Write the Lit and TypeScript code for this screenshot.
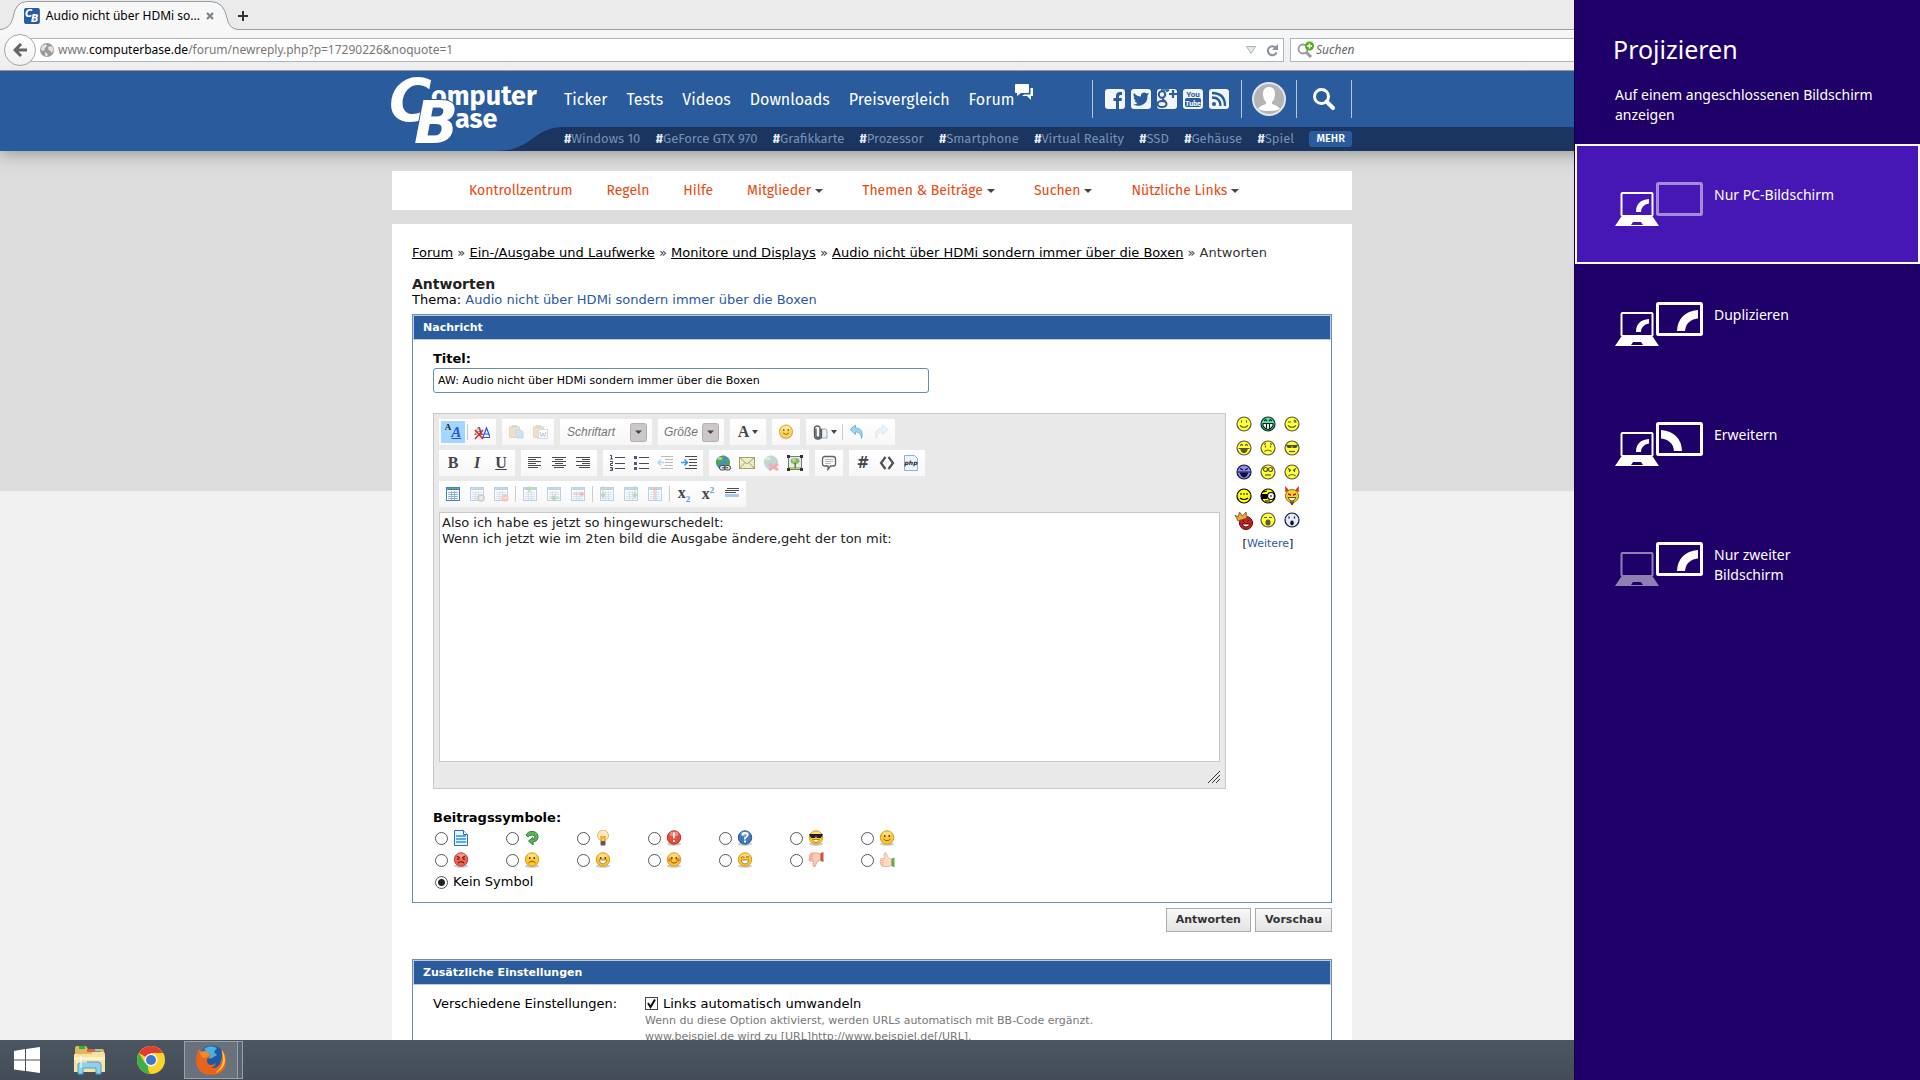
import { LitElement, html, svg, css, TemplateResult } from "lit";
import { customElement } from "lit/decorators.js";
import { classMap } from "lit/directives/class-map.js";

type Art = ReturnType<typeof svg>;

const icon = (w: number, h: number, art: Art, vb = `0 0 ${w} ${h}`): TemplateResult =>
  html`<svg width=${w} height=${h} viewBox=${vb} aria-hidden="true">${art}</svg>`;

/* ---------- editor tool icons, 16x16 ---------- */
const lines = (rows: number[][], color = "#4a4a50"): Art =>
  svg`${rows.map(([x, y, w]) => svg`<rect x=${x} y=${y} width=${w} height="1" fill=${color} />`)}`;

const table = svg`<rect x="1.5" y="1.5" width="13" height="13" fill="#fff" stroke="#4a7fc0"/>
  <rect x="2" y="2" width="12" height="2" fill="#5c97dc"/><rect x="3" y="3" width="10" height="1" fill="#4f8a4a"/>
  <path d="M3 6.5h10M3 8.5h10M3 10.5h10M3 12.5h10M6.5 5v9M9.5 5v9" stroke="#8db2df" fill="none"/>`;
const globe = svg`<circle cx="8" cy="7.5" r="7" fill="#4d87d6"/><path d="M2 4C4 1 8 0 10 1L8 4 9 6 5 8 3 12 1 8zM11 3l3 2 .8 4-3 4-2-3 1-3z" fill="#4fa64a"/><ellipse cx="5" cy="3.500" rx="2.500" ry="1.500" fill="#fff" opacity=".5"/>`;

const art: Record<string, Art> = {
  paste: svg`<rect x="1.500" y="2.500" width="10" height="11" rx="1" fill="#dca963" stroke="#c58c42"/><rect x="4" y="1" width="5" height="3" fill="#999"/><path d="M7 6h6l2 2v6H9z" fill="#76bde8" stroke="#5b9bc8"/>`,
  pasteword: svg`<rect x="1.500" y="2.500" width="10" height="11" rx="1" fill="#dca963" stroke="#c58c42"/><rect x="4" y="1" width="5" height="3" fill="#999"/><rect x="6.500" y="5.500" width="9" height="9" fill="#fff" stroke="#7f9fd0"/><path d="M8 8l1.500 5 1.500-4 1.500 4L14 8" stroke="#5570a0" fill="none"/>`,
  smile: svg`<circle cx="8" cy="8.500" r="7" fill="#b9a88a" opacity=".5"/><circle cx="8" cy="7.500" r="6.500" fill="#fcd45c" stroke="#e2a63a"/><ellipse cx="8" cy="4.500" rx="4.500" ry="2.500" fill="#fff" opacity=".45"/><path d="M5 9q3 3 6 0" stroke="#9a6a1c" fill="none"/><rect x="5" y="5" width="1.500" height="2" fill="#9a6a1c"/><rect x="9.500" y="5" width="1.500" height="2" fill="#9a6a1c"/>`,
  clip: svg`<path d="M8 5h6l1 2v7H8z" fill="#eef3f8" stroke="#9ab" /><path d="M4 4.500v7a2 2 0 004 0V3.500a3 2.500 0 00-5.500 0V12a3.500 3 0 007 0V5" fill="none" stroke="#555" stroke-width="1.300"/>`,
  undo: svg`<path d="M1 5.500L6.500 1v3C12 4 14.500 8 12.500 14.500 12 10 10 8 6.500 8v2.500z" fill="#9fd2f4" stroke="#5fa7d8" stroke-width=".8"/>`,
  redo: svg`<path d="M15 5.500L9.500 1v3C4 4 1.500 8 3.500 14.500 4 10 6 8 9.500 8v2.500z" fill="#c6e3f6" stroke="#8cc0de" stroke-width=".8"/>`,
  left: lines([[1, 2, 13], [1, 4, 8], [1, 6, 13], [1, 8, 8], [1, 10, 13], [1, 12, 10]]),
  center: lines([[1, 2, 14], [4, 4, 8], [1, 6, 14], [4, 8, 8], [1, 10, 14], [3, 12, 10]]),
  right: lines([[1, 2, 14], [7, 4, 8], [1, 6, 14], [7, 8, 8], [1, 10, 14], [4, 12, 11]]),
  ol: svg`${lines([[6, 2, 10], [6, 8, 10], [6, 13, 10]])}<path d="M2.500 0v4M1 .500h1.500M1 4h3M1 6.500h2.500v2H1.500v2H4M1 12.500h2.500v3H1M1.500 14h2" stroke="#4a4a60" fill="none"/>`,
  ul: svg`${lines([[6, 2, 10], [6, 8, 10], [6, 13, 10]])}<rect x="1" y="1" width="3" height="3" fill="#557"/><rect x="1" y="7" width="3" height="3" fill="#557"/><rect x="1" y="12" width="3" height="3" fill="#557"/>`,
  outdent: svg`${lines([[4, 1, 12], [8, 4, 8], [8, 7, 8], [8, 10, 8], [4, 13, 12]])}<path d="M7 7.500H1M4 4.500l-3 3 3 3" stroke="#2a9bd8" stroke-width="1.500" fill="none"/>`,
  indent: svg`${lines([[4, 1, 12], [8, 4, 8], [8, 7, 8], [8, 10, 8], [4, 13, 12]])}<path d="M0 7.500h6M3.500 4.500l3 3-3 3" stroke="#2a9bd8" stroke-width="1.500" fill="none"/>`,
  link: svg`${globe}<rect x="4.500" y="10.500" width="6" height="4.500" rx="2" fill="#ddd" stroke="#444"/><rect x="9.500" y="10.500" width="6" height="4.500" rx="2" fill="#ddd" stroke="#444"/><path d="M7 12.800h6" stroke="#444"/>`,
  mail: svg`<rect x=".500" y="2.500" width="15" height="11" fill="#eeeec4" stroke="#a0a070"/><path d="M1 3l7 6 7-6M1 13l5-5.500M15 13l-5-5.500" stroke="#a0a070" fill="none"/>`,
  unlink: svg`${globe}<path d="M6 9l9 6M15 9l-9 6" stroke="#e02020" stroke-width="3"/>`,
  image: svg`<rect x="1.500" y="1.500" width="13" height="13" fill="#dff0f4" stroke="#777"/><rect x="2" y="12" width="12" height="2" fill="#a6d468"/><ellipse cx="8" cy="6" rx="4.500" ry="3" fill="#86b85c"/><circle cx="7" cy="5" r="2" fill="#b4d88c"/><rect x="7.500" y="8" width="1.500" height="5" fill="#8a6238"/><path d="M0 0h3v3H0zM13 0h3v3h-3zM0 13h3v3H0zM13 13h3v3h-3z" fill="#333"/>`,
  quote: svg`<path d="M4 1.500h8q2.500 0 2.500 2.500v5q0 2-2.500 2H9.500L7 14.500V11H4q-2.500 0-2.500-2V4Q1.500 1.500 4 1.500z" fill="#fff" stroke="#606068" stroke-width="1.300"/><path d="M4 4.500h8M4 6.500h8M4 8.500h6" stroke="#bbb"/>`,
  code: svg`<path d="M6.500 2L2 8l4.500 6M9.500 2L14 8l-4.500 6" stroke="#4e4e58" stroke-width="2.200" fill="none"/>`,
  table,
  tableprop: svg`${table}<circle cx="12" cy="12" r="3" fill="#ccc" stroke="#777" stroke-width="1.500"/>`,
  tabledel: svg`${table}<circle cx="12" cy="12" r="3.500" fill="#e86a2c"/><rect x="10" y="11.500" width="4" height="1" fill="#fff"/>`,
  rowbefore: svg`${table}<path d="M15 3H6M8 .500L4 3l4 2.500z" stroke="#3c9a3c" fill="#3c9a3c"/>`,
  rowafter: svg`${table}<path d="M15 12H8M9 9.500L5 12l4 2.500z" stroke="#3c9a3c" fill="#3c9a3c"/>`,
  rowdel: svg`${table}<path d="M3 8h9M11 6l4 2-4 2z" stroke="#e04040" fill="#e04040"/>`,
  colbefore: svg`${table}<path d="M4 0v9M2 8l2 4 2-4z" stroke="#3c9a3c" fill="#3c9a3c"/>`,
  colafter: svg`${table}<path d="M12 0v9M10 8l2 4 2-4z" stroke="#3c9a3c" fill="#3c9a3c"/>`,
  coldel: svg`${table}<path d="M8 4v10M6 4l2-3 2 3z" stroke="#e04040" fill="#e04040"/>`,
  hr: svg`${lines([[3, 2, 12], [1, 4, 14], [1, 6, 11]])}<rect x="1" y="8" width="14" height="3" fill="#a9c8f0"/>`,
};

/* ---------- forum smilies ---------- */
const face = (fill: string, line: string, features: Art): Art =>
  svg`<circle cx="8" cy="8" r="7" fill=${fill} stroke=${line} stroke-width="1.200"/><g fill="none" stroke=${line} stroke-width="1.200">${features}</g>`;
const Y = "#ffff3c";
const L = "#5c5836";
const smilies: [string, Art][] = [
  ["Smile", face(Y, L, svg`<path d="M5.500 4.500v2M10.500 4.500v2M4 9.500q4 3.500 8 0"/>`)],
  ["Biggrin", face("#4fe3a8", "#0c2a20", svg`<path d="M4 5l1.500-1.500L7 5M9 5l1.500-1.500L12 5"/><path d="M3 7.500h10v2q-2 4-5 4t-5-4z" fill="#fff"/><path d="M6.500 8v5M9.500 8v5"/>`)],
  ["Wink", face(Y, L, svg`<path d="M4 6h3M10 4l2 1.500M9.500 6h3M4 9.500q4 3.500 8 0"/>`)],
  ["Lol", face(Y, L, svg`<path d="M4 5.500l1.500-1 1.500 1M9 5.500l1.500-1 1.500 1M2.500 8.500h11"/><path d="M5 9.500h6q-1 3-3 3t-3-3z" fill="#5c5836"/>`)],
  ["Frown", face(Y, L, svg`<path d="M4 4.500l2-1M10 3.500l2 1M5.500 5.500v2M10.500 5.500v2M4.500 11.500q3.500-3 7 0"/>`)],
  ["Cool", face(Y, L, svg`<path d="M1 5.500h14"/><path d="M3 5.500h4v2H4zM9 5.500h4l-1 2H9z" fill="#3a3828"/><path d="M5 11.500h6"/>`)],
  ["Evillol", face("#8d8df5", "#111130", svg`<path d="M4 4.500L7 6M12 4.500L9 6M2 8h12"/><path d="M4.500 9h7q-1.500 4-3.500 4t-3.500-4z" fill="#111130"/>`)],
  ["Rolleyes", face(Y, L, svg`<circle cx="5.500" cy="5.500" r="2"/><circle cx="10.500" cy="5.500" r="2"/><path d="M5 11h6"/>`)],
  ["Mad", face(Y, L, svg`<path d="M4 4.500L7 6.500M12 4.500L9 6.500M5.500 6v2M10.500 6v2M4.500 12q3.500-3 7 0"/>`)],
  ["Happy", face("#ffff00", "#000", svg`<path d="M4 6h2M7 6h2M10 6h2M4 10q4 3 8 0"/>`)],
  ["Freak", face("#ffff00", "#000", svg`<path d="M1.500 6.500h5v4h-4z" fill="#000"/><circle cx="11" cy="8" r="3.500" fill="#fff"/><path d="M10 8h2M3 4l4-1M5 13h5"/>`)],
  ["Devil", svg`<path d="M2 4V0l2.500 3M14 4V0l-2.500 3" stroke="#e02020" fill="none" stroke-width="1.500"/><circle cx="8" cy="8" r="6.500" fill="#f0d820" stroke="#8a7010"/><path d="M4 6l3 1M12 6L9 7" stroke="#c01010" stroke-width="1.500"/><path d="M4 9.500h8q-1.500 3.500-4 3.500t-4-3.500z" fill="#fff" stroke="#6a4a10"/><path d="M6 14h4l-2 3z" fill="#7a4010" stroke="#7a4010"/>`],
  ["King", svg`<circle cx="10" cy="11" r="6.500" fill="#c81e1e" stroke="#4a0a0a"/><path d="M-1 3l3 2 1.500-5 3 4L10 0l1 6-9 3z" fill="#eaa83c" stroke="#7a4a10" stroke-width=".8"/><path d="M6.500 8.500l2 1.500M13 8l-2 2" stroke="#300"/><path d="M6 12h8q-1.500 3-4 3t-4-3z" fill="#fff" stroke="#300" stroke-width=".8"/>`],
  ["Gaehn", face(Y, L, svg`<path d="M4 5.500h3M9 5.500h3"/><ellipse cx="8" cy="10.500" rx="2" ry="2.500" fill="#5c5836"/>`)],
  ["Eek", face("#e4ecfc", "#0c1428", svg`<path d="M5 4.500v2M10.500 4.500v2"/><ellipse cx="8" cy="11" rx="1.200" ry="1.800" fill="#0c1428"/>`)],
];

/* ---------- post symbols ---------- */
const ball = (fill: string, edge: string, inner: Art): Art =>
  svg`<ellipse cx="8" cy="14" rx="7" ry="1.800" fill="#999" opacity=".5"/><circle cx="8" cy="7.500" r="6.700" fill=${fill} stroke=${edge}/><ellipse cx="8" cy="4" rx="4.500" ry="2.400" fill="#fff" opacity=".35"/>${inner}`;
const G = "#fbc832";
const GE = "#d99a18";
const eyes = svg`<rect x="5" y="5" width="1.500" height="2" fill="#6a4208"/><rect x="9.500" y="5" width="1.500" height="2" fill="#6a4208"/>`;
const hand = svg`<path d="M12.500 7.500Q9 6 8.500 4.500L7 .800Q5 .500 5 3l.5 3.500H2Q.500 7 1.500 8.500.500 9.500 1.500 10.800 1 12 2 12.800 2 14.500 4 14.500h5l3.500-1z" stroke-width=".8"/><path d="M1.500 8.700h3.500M1.700 10.800h3.300M2.200 12.700h3" fill="none" stroke-width=".8"/>`;
const symbols: [string, Art][] = [
  ["Standard", svg`<path d="M1.500.500h9l4 4v11h-13z" fill="#e8f4ff" stroke="#2c6cb8"/><path d="M3 6h10M3 9h10M3 12h10" stroke="#55aaf0" stroke-width="2"/><path d="M10.500.500v4h4" fill="#fff" stroke="#2c6cb8"/>`],
  ["Pfeil", svg`<path d="M2 5q2-4 7-3.500 5.500 1 5 6-.5 4-5 4.500v3L4.500 11 9 7.500V9.500q2-.5 2-2.500T8 5Q5.500 5 4 7z" fill="#5cb85a" stroke="#2f7d34"/>`],
  ["Idee", svg`<circle cx="8" cy="5.500" r="5.500" fill="#fde9bc" stroke="#e4b264"/><path d="M6 11V6l2 1.500L10 6v5" fill="#ffd030" stroke="#e08c10"/><rect x="5.500" y="11" width="5" height="4.500" rx="1" fill="#5a5a5a"/>`],
  ["Achtung", ball("#ea4c3c", "#b82c24", svg`<path d="M7 2.500h2L8.700 8.500H7.300zM7 10h2v2H7z" fill="#fff"/>`)],
  ["Frage", ball("#3e78c0", "#2a5590", svg`<path d="M5.500 5.500q0-2.500 2.500-2.500t2.500 2.300Q10.500 7 8 8v1.500" stroke="#fff" stroke-width="1.800" fill="none"/><rect x="7" y="10.500" width="2" height="2" fill="#fff"/>`)],
  ["Cool", ball(G, GE, svg`<path d="M1 4h14l-2 4h-4L8 6 7 8H3z" fill="#222"/><path d="M4.500 9.500h7q-1 3-3.500 3t-3.500-3z" fill="#fff" stroke="#8a5a10" stroke-width=".7"/>`)],
  ["Lächeln", ball(G, GE, svg`${eyes}<path d="M4.500 9q3.500 3.500 7 0" stroke="#8a5a10" fill="none"/>`)],
  ["Böse", ball("#ee6252", "#c23a2e", svg`<path d="M4 4l3 2M12 4L9 6M5 6v2M11 6v2M5 11q3-2.500 6 0" stroke="#6c120c" stroke-width="1.200" fill="none"/>`)],
  ["Traurig", ball(G, GE, svg`${eyes}<path d="M4.500 11q3.500-3.500 7 0" stroke="#8a5a10" fill="none"/>`)],
  ["Grinsen", ball(G, GE, svg`${eyes}<path d="M4 8h8q-1 4-4 4T4 8z" fill="#fff" stroke="#8a5a10" stroke-width=".7"/>`)],
  ["Peinlich", ball(G, GE, svg`${eyes}<circle cx="4" cy="8" r="1.800" fill="#ee6a3c"/><circle cx="12" cy="8" r="1.800" fill="#ee6a3c"/><path d="M5 10q3 2.500 6 0" stroke="#8a5a10" fill="none"/>`)],
  ["Zwinkern", ball(G, GE, svg`<path d="M4 6l2-1.500L7.500 6M9 5h3" stroke="#8a5a10" fill="none"/><path d="M4 8h8q-1 4-4 4T4 8z" fill="#fff" stroke="#8a5a10" stroke-width=".7"/>`)],
  ["Daumen runter", svg`<g transform="translate(0 15.500) scale(1 -1)" fill="#fbcab4" stroke="#e8907c">${hand}</g><path d="M12.500 1l3-1v10l-3-1z" fill="#c4584a"/>`],
  ["Daumen hoch", svg`<g fill="#fbdac6" stroke="#eaa68c">${hand}</g><path d="M12.500 6.500l3-1v10l-3-1.500z" fill="#5cb04c"/>`],
];

/* ---------- projection mode icons ---------- */
const laptop = (on: boolean): Art => svg`<g opacity=${on ? 1 : 0.5}>
  <rect x="6.500" y="11" width="31" height="23" rx="1" fill="none" stroke="#fff" stroke-width="2"/>
  <path d="M6 35h32l6 9H0zM18 40l-2 3h12l-2-3z" fill="#fff" fill-rule="evenodd"/>
  ${on ? svg`<path d="M21 30q0-12 13-13v4.500q-8 1.500-8 8.500z" fill="#fff"/>` : ""}</g>`;
const monitor = (mode: "off" | "same" | "ext"): Art => svg`<g opacity=${mode === "off" ? 0.5 : 1}>
  <rect x="42.500" y="1.500" width="44" height="31" rx="1" fill="none" stroke="#fff" stroke-width="3"/>
  ${mode === "same" ? svg`<path d="M62 29Q63 10 83 8v8.500Q71 18 70 29z" fill="#fff"/>` : ""}
  ${mode === "ext" ? svg`<path d="M67 29Q66 10 46 8v8.500Q58 18 59 29z" fill="#fff"/>` : ""}</g>`;

@customElement("project-panel")
class ProjectPanel extends LitElement {
  static styles = css`
    :host { display: block; background: #1f0068; color: #fff; font: 14px/20px "Noto Sans", "Open Sans", sans-serif; border-left: 1px solid #14004a; box-sizing: border-box; }
    h1 { margin: 0; padding: 31px 38px 0; font-size: 25px; line-height: 36px; font-weight: 400; }
    p { margin: 0; padding: 18px 40px 19px; }
    .mode { display: flex; gap: 11px; width: 100%; height: 120px; padding: 36px 38px 0; border: 2px solid transparent; background: none; color: #fff; font: inherit; text-align: left; align-items: flex-start; }
    .mode.on { background: #4617b4; border-color: #fff; }
    .mode span { max-width: 136px; padding-top: 3px; }
    svg { flex: none; }
  `;
  render() {
    const modes: [string, Art][] = [
      ["Nur PC-Bildschirm", svg`${laptop(true)}${monitor("off")}`],
      ["Duplizieren", svg`${laptop(true)}${monitor("same")}`],
      ["Erweitern", svg`${laptop(true)}${monitor("ext")}`],
      ["Nur zweiter Bildschirm", svg`${laptop(false)}${monitor("same")}`],
    ];
    return html`<h1>Projizieren</h1>
      <p>Auf einem angeschlossenen Bildschirm anzeigen</p>
      ${modes.map(([label, a], i) => html`<button class=${classMap({ mode: true, on: i === 0 })}>${icon(88, 44, a)}<span>${label}</span></button>`)}`;
  }
}

@customElement("browser-chrome")
class BrowserChrome extends LitElement {
  static styles = css`
    :host { display: block; font: 12px/16px "Noto Sans", "Open Sans", sans-serif; color: #000; }
    .tabs { display: flex; height: 29px; background: #ebebeb; border-bottom: 1px solid #929da6; }
    .tab { position: relative; display: flex; align-items: center; width: 238px; height: 30px; box-sizing: border-box; padding: 2px 24px 0 24px; gap: 6px; }
    .shape { position: absolute; left: 0; top: 0; }
    .tab > :not(.shape) { position: relative; }
    .title { flex: 1; white-space: nowrap; }
    button { border: 0; padding: 0; background: none; display: flex; }
    .plus { align-self: center; padding-top: 2px; }
    .bar { display: flex; align-items: center; height: 40px; background: linear-gradient(#f7f7f7, #ededed); border-bottom: 1px solid #97968f; padding: 0 0 0 4px; }
    .back { width: 32px; height: 32px; border: 1px solid #a5a5a5; border-radius: 50%; background: linear-gradient(#fff, #f0f0f0); align-items: center; justify-content: center; z-index: 1; box-sizing: border-box; flex: none; }
    .field { display: flex; align-items: center; height: 24px; box-sizing: border-box; border: 1px solid #a9b5bf; background: #fff; }
    .url { flex: 1; margin-left: -5px; padding: 0 4px 0 9px; gap: 4px; border-left: 0; color: #777; }
    .address { flex: 1; }
    .address b { font-weight: 400; color: #000; }
    .search { width: 630px; margin-left: 6px; padding: 0 6px; gap: 2px; }
    .search input { border: 0; outline: 0; flex: 1; font: italic 12px/16px "Noto Sans", "Open Sans", sans-serif; padding: 0; background: none; }
    .search input::placeholder { color: #666; }
    .go { padding-left: 6px; }
  `;
  render() {
    return html`<div class="tabs">
        <div class="tab">
          <svg class="shape" width="238" height="30" viewBox="0 0 238 30" aria-hidden="true"><path d="M0 29.500Q10 29 13 18 15 2 27 1.500H211Q224 2 227 18 229 29 238 29.500V30H0z" fill="#f7f7f7"/><path d="M0 29.500Q10 29 13 18 15 2 27 1.500H211Q224 2 227 18 229 29 238 29.500" fill="none" stroke="#929da6"/></svg>
          ${icon(16, 16, svg`<rect width="16" height="16" rx="2" fill="#2a5c9d"/><text x="1" y="9" font-family="DejaVu Sans" font-weight="bold" font-style="italic" font-size="10" fill="#fff">C</text><text x="7" y="14" font-family="DejaVu Sans" font-weight="bold" font-style="italic" font-size="10" fill="#fff">B</text>`)}
          <span class="title">Audio nicht über HDMi so...</span>
          <button aria-label="Tab schließen">${icon(8, 8, svg`<path d="M1 1l6 6M7 1L1 7" stroke="#777f88" stroke-width="2"/>`)}</button>
        </div>
        <button class="plus" aria-label="Neuer Tab">${icon(10, 10, svg`<path d="M5 0v10M0 5h10" stroke="#333" stroke-width="2"/>`)}</button>
      </div>
      <div class="bar">
        <button class="back" aria-label="Zurück">${icon(14, 14, svg`<path d="M8 1L2 7l6 6M2 7h12" stroke="#62666a" stroke-width="3" fill="none"/>`)}</button>
        <div class="field url">
          ${icon(14, 14, svg`<circle cx="7" cy="7" r="7" fill="#9a9a9a"/><path d="M2 3l4-2 1 2-2 2-1 3-3-1zM8 4l4-1 1.500 4-2 3-1-2-2-1zM5 9l3 2-1 2.500-2-1z" fill="#e4e4e4"/>`)}
          <span class="address">www.<b>computerbase.de</b>/forum/newreply.php?p=17290226&amp;noquote=1</span>
          ${icon(10, 8, svg`<path d="M.500.500h9L5 7.500z" fill="#e4e8ec" stroke="#a9b5bf"/>`)}
          <button class="go" aria-label="Neu laden">${icon(13, 13, svg`<path d="M10.500 8.500a4.500 4.500 0 11-.5-4.500" stroke="#86939f" stroke-width="2" fill="none"/><path d="M12 0v6H6z" fill="#86939f"/>`)}</button>
        </div>
        <label class="field search">
          ${icon(17, 18, svg`<circle cx="6" cy="8" r="4.500" fill="none" stroke="#999" stroke-width="1.800"/><path d="M9 11l5 5" stroke="#999" stroke-width="3"/><circle cx="12.500" cy="5" r="4.500" fill="#4cb012"/><path d="M12.500 2.500v5M10 5h5" stroke="#fff" stroke-width="1.500"/>`)}
          <input placeholder="Suchen" aria-label="Suchen" />
        </label>
      </div>`;
  }
}

@customElement("site-header")
class SiteHeader extends LitElement {
  static styles = css`
    :host { display: block; position: relative; z-index: 1; background: linear-gradient(#1a355f, #1a355f) right bottom / 50% 24px no-repeat, #2a5b9c; color: #fff; font-family: "Fira Sans", "Noto Sans", sans-serif; box-shadow: 0 2px 16px rgba(0, 0, 0, 0.35); }
    .inner { display: flex; max-width: 960px; height: 80px; margin: 0 auto; }
    .logo { flex: none; }
    .logo svg { display: block; overflow: visible; }
    a { color: inherit; text-decoration: none; }
    .right { flex: 1; display: flex; flex-direction: column; }
    .top { display: flex; height: 56px; align-items: center; }
    nav { display: flex; gap: 19px; font-size: 16px; line-height: 22px; flex: 1; white-space: nowrap; padding-top: 2px; }
    .forum { display: flex; gap: 1px; align-items: flex-start; }
    .forum svg { margin-top: -5px; }
    .box { display: flex; align-items: center; justify-content: center; height: 38px; border-left: 1px solid #b9c6da; box-sizing: border-box; }
    .social { gap: 6px; width: 149px; }
    .user { width: 55px; }
    .find { border-right: 1px solid #b9c6da; width: 56px; }
    button { display: flex; padding: 0; border: 0; background: none; }
    .tags { display: flex; align-items: center; justify-content: space-between; height: 24px; background: #1a355f; font-size: 13px; line-height: 16px; color: #7891b5; white-space: nowrap; }
    .tags b { color: #e8ecf2; }
    .tags .more { background: #2a5b9c; color: #fff; border-radius: 3px; padding: 0 7px; font: 500 11px/16px "Fira Sans", "Noto Sans", sans-serif; }
  `;
  render() {
    const sq = (a: Art) => icon(20, 20, svg`<rect width="20" height="20" rx="3" fill="#f2f6fa"/>${a}`);
    const social: [string, TemplateResult][] = [
      ["Facebook", sq(svg`<path d="M11 20v-8H8.500V9H11V7q0-4 4-4h2v3h-1.500Q14 6 14 7.500V9h3l-.5 3H14v8z" fill="#2a5b9c"/>`)],
      ["Twitter", sq(svg`<path d="M3 4q3 3.500 7 3.500Q9.500 4 13 3.500q1.500 0 2.500 1L18 4l-1.500 2.500Q17 14 10 16.500q-4 1-8-1 3 0 4.500-1.500Q4 13.500 3.500 11.500H5Q2.500 10.500 2.500 8L4 8.500Q1.500 6.500 3 4z" fill="#2a5b9c"/>`)],
      ["Google+", sq(svg`<path d="M16 1v8M12 5h8" stroke="#2a5b9c" stroke-width="2.200"/><circle cx="5" cy="5.500" r="3.200" fill="none" stroke="#2a5b9c" stroke-width="2"/><ellipse cx="5" cy="15" rx="4.500" ry="3" fill="none" stroke="#2a5b9c" stroke-width="2"/><path d="M4 1h8L9 2.500M7 8q-3 2 0 3l2 2" stroke="#2a5b9c" stroke-width="1.500" fill="none"/>`)],
      ["YouTube", sq(svg`<text x="10" y="8" text-anchor="middle" font-family="Liberation Sans Narrow, Roboto" font-weight="bold" font-size="8" fill="#2a5b9c">You</text><rect x="2" y="9" width="16" height="9" rx="2" fill="#2a5b9c"/><text x="10" y="16.500" text-anchor="middle" font-family="Liberation Sans Narrow, Roboto" font-weight="bold" font-size="7" fill="#fff">Tube</text>`)],
      ["RSS", sq(svg`<circle cx="5" cy="15" r="2" fill="#2a5b9c"/><path d="M3 8.500q8.500 0 8.500 8.500M3 4q13 0 13 13" stroke="#2a5b9c" stroke-width="2.300" fill="none"/>`)],
    ];
    const tags = ["Windows 10", "GeForce GTX 970", "Grafikkarte", "Prozessor", "Smartphone", "Virtual Reality", "SSD", "Gehäuse", "Spiel"];
    return html`<div class="inner">
      <a class="logo" href="#" aria-label="ComputerBase">
        ${icon(172, 80, svg`<path d="M103 80C142 80 140 56 172 56V80z" fill="#1a355f"/>
          <g fill="#fff" font-weight="bold">
            <g font-family="Fira Sans, Noto Sans, sans-serif" font-size="27"><text x="39" y="34">omputer</text><text x="63" y="57">ase</text></g>
            <g font-family="DejaVu Sans, sans-serif" font-style="italic" font-size="58" stroke="#2a5b9c" stroke-width="2" paint-order="stroke"><text x="-3" y="50">C</text><text x="22" y="72">B</text></g>
          </g>`)}
      </a>
      <div class="right">
        <div class="top">
          <nav>
            ${["Ticker", "Tests", "Videos", "Downloads", "Preisvergleich"].map((t) => html`<a href="#">${t}</a>`)}
            <a class="forum" href="#">Forum${icon(18, 16, svg`<path d="M1 0h12q1 0 1 1v7q0 1-1 1H6L2 12V9H1Q0 9 0 8V1Q0 0 1 0z" fill="#fff"/><path d="M15.500 4H18v8h-2v4l-4-4H7l2-1.500h6.500z" fill="#fff"/>`)}</a>
          </nav>
          <div class="box social">${social.map(([n, i]) => html`<button aria-label=${n}>${i}</button>`)}</div>
          <div class="box user"><button aria-label="Benutzer">${icon(34, 34, svg`<circle cx="17" cy="17" r="16" fill="#b4b4b4" stroke="#dfe6ef" stroke-width="2"/><path d="M17 5q6 0 6 7 0 5-3 8v2q6 1.500 8 5-4 2-11 2T6 27q2-3.500 8-5v-2q-3-3-3-8 0-7 6-7z" fill="#fff"/>`)}</button></div>
          <div class="box find"><button aria-label="Suche">${icon(24, 24, svg`<circle cx="9.500" cy="9.500" r="7" fill="none" stroke="#fff" stroke-width="3"/><path d="M14.500 14.500l6.500 6.500" stroke="#fff" stroke-width="4" stroke-linecap="round"/>`)}</button></div>
        </div>
        <div class="tags">${tags.map((t) => html`<a href="#"><b>#</b>${t}</a>`)}<button class="more">MEHR</button></div>
      </div>
    </div>`;
  }
}

type Tool = string | TemplateResult;

@customElement("post-editor")
class PostEditor extends LitElement {
  static styles = css`
    :host { display: block; box-sizing: border-box; border: 1px solid #c8c8c8; background: #e9e9e9; padding: 5px; color: #222; font-family: "DejaVu Sans", Verdana, sans-serif; }
    .tools { display: flex; flex-direction: column; gap: 5px; margin-bottom: 5px; }
    .row { display: flex; gap: 6px; }
    .group { display: flex; align-items: center; height: 26px; box-sizing: border-box; padding: 2px; background: linear-gradient(#fff, #f7f7f7); }
    .tool { display: flex; align-items: center; justify-content: center; gap: 3px; width: 24px; height: 22px; padding: 0; border: 0; background: none; font: bold 16px/18px "Liberation Serif", serif; color: #45454f; white-space: nowrap; }
    .tool.on { background: #a3d7ff; }
    .tool.dim { opacity: 0.35; }
    .tool.wide { width: 32px; }
    .tool small { font-size: 9px; line-height: 9px; color: #222; }
    .tool sub, .tool sup { font-size: 9px; line-height: 9px; color: #5b9ae0; }
    .tool i { font-weight: 700; }
    .blue { color: #2456e8; text-decoration: underline; }
    .pair { display: flex; align-items: flex-start; font-size: 15px; }
    .sans { font: bold 15px/18px "DejaVu Sans", sans-serif; }
    .sep { width: 1px; height: 16px; margin: 0 2px; background: #ccc; }
    .combo { display: grid; align-items: center; margin-right: 3px; }
    .combo > * { grid-area: 1 / 1; }
    .combo svg { justify-self: end; pointer-events: none; }
    select { appearance: none; border: 0; margin: 0; padding: 0 20px 0 5px; background: none; height: 22px; font: italic 12px/16px "Liberation Sans", Arial, sans-serif; color: #757575; width: 85px; }
    select.short { width: 59px; padding-left: 4px; }
    textarea { display: block; width: 100%; height: 250px; box-sizing: border-box; border: 1px solid #c8c8c8; background: #fff; resize: none; padding: 2px; margin: 0; outline: 0; font: 13px/16px "DejaVu Sans", Verdana, sans-serif; color: #222; }
    .foot { display: flex; justify-content: flex-end; height: 21px; align-items: flex-end; }
  `;
  private tool(name: string, label: string, cls: Record<string, boolean> = {}) {
    return html`<button class=${classMap({ tool: true, ...cls })} title=${label} aria-label=${label}>${icon(16, 16, art[name])}</button>`;
  }
  private glyph(content: TemplateResult, label: string, cls: Record<string, boolean> = {}) {
    return html`<button class=${classMap({ tool: true, ...cls })} title=${label} aria-label=${label}>${content}</button>`;
  }
  private combo(label: string, cls: string) {
    return html`<label class="combo"><select class=${cls} aria-label=${label}><option>${label}</option></select>
      ${icon(17, 19, svg`<rect x=".500" y=".500" width="16" height="18" rx="2" fill="#cdc8c8" stroke="#b4b0b0"/><path d="M5 7.500h7L8.500 11z" fill="#444"/>`)}</label>`;
  }
  render() {
    const sep = html`<span class="sep"></span>`;
    const caret = icon(6, 4, svg`<path d="M0 0h6L3 4z" fill="#444"/>`);
    const dim = { dim: true };
    const g = (...t: Tool[]) => html`<div class="group">${t}</div>`;
    return html`<div class="tools">
        <div class="row">
          ${g(this.glyph(html`<span class="pair"><small>A</small><i class="blue">A</i></span>`, "Editor umschalten", { on: true }), sep,
            html`<button class="tool" aria-label="Formatierung entfernen">${icon(16, 16, svg`<text x="0" y="11" font-family="Liberation Serif" font-size="13" font-weight="bold" fill="#666">A</text><path d="M9 13l3.500-9 3.500 9M10 10h5M8 13.500h8" stroke="#2456e8" stroke-width="1.200" fill="none"/><path d="M1 6l8 9M9 6l-8 9" stroke="#ee2020" stroke-width="1.500"/>`)}</button>`)}
          ${g(this.tool("paste", "Einfügen", dim), this.tool("pasteword", "Aus Word einfügen", dim))}
          ${g(this.combo("Schriftart", ""))}
          ${g(this.combo("Größe", "short"))}
          ${g(this.glyph(html`A${caret}`, "Textfarbe", { wide: true }))}
          ${g(this.tool("smile", "Smiley"))}
          ${g(html`<button class="tool wide" aria-label="Anhang">${icon(16, 16, art.clip)}${caret}</button>`, sep, this.tool("undo", "Rückgängig"), this.tool("redo", "Wiederherstellen", dim))}
        </div>
        <div class="row">
          ${g(this.glyph(html`B`, "Fett"), this.glyph(html`<i>I</i>`, "Kursiv"), this.glyph(html`<u>U</u>`, "Unterstrichen"))}
          ${g(this.tool("left", "Links"), this.tool("center", "Zentriert"), this.tool("right", "Rechts"))}
          ${g(this.tool("ol", "Nummerierte Liste"), this.tool("ul", "Liste"), this.tool("outdent", "Einzug verkleinern", dim), this.tool("indent", "Einzug vergrößern"))}
          ${g(this.tool("link", "Link"), this.tool("mail", "E-Mail"), this.tool("unlink", "Link entfernen", dim), this.tool("image", "Grafik"))}
          ${g(this.tool("quote", "Zitat"))}
          ${g(this.glyph(html`#`, "Code", { sans: true }), this.tool("code", "HTML"),
            html`<button class="tool" aria-label="PHP">${icon(16, 16, svg`<path d="M1.500.500h10l3 3v12h-13z" fill="#eef4fc" stroke="#8ab0dc"/><text x="8" y="10" text-anchor="middle" font-family="DejaVu Sans" font-style="italic" font-weight="bold" font-size="6" fill="#222">php</text>`)}</button>`)}
        </div>
        <div class="row">
          ${g(this.tool("table", "Tabelle"), this.tool("tableprop", "Tabelleneigenschaften", dim), this.tool("tabledel", "Tabelle löschen", dim), sep,
            this.tool("rowbefore", "Zeile davor", dim), this.tool("rowafter", "Zeile danach", dim), this.tool("rowdel", "Zeile löschen", dim), sep,
            this.tool("colbefore", "Spalte davor", dim), this.tool("colafter", "Spalte danach", dim), this.tool("coldel", "Spalte löschen", dim), sep,
            this.glyph(html`<span>x<sub>2</sub></span>`, "Tiefgestellt"), this.glyph(html`<span>x<sup>2</sup></span>`, "Hochgestellt"), this.tool("hr", "Linie"))}
        </div>
      </div>
      <textarea aria-label="Nachricht" spellcheck="false" .value=${"Also ich habe es jetzt so hingewurschedelt:\nWenn ich jetzt wie im 2ten bild die Ausgabe ändere,geht der ton mit:"}></textarea>
      <div class="foot">${icon(12, 12, svg`<path d="M0 12L12 0M4 12l8-8M8 12l4-4" stroke="#333"/>`)}</div>`;
  }
}

@customElement("app-root")
class AppRoot extends LitElement {
  static styles = css`
    :host { display: flex; flex-direction: column; position: relative; height: 100vh; overflow: hidden; font: 13px/16px "DejaVu Sans", Verdana, sans-serif; color: #000; }
    browser-chrome { flex: none; }
    .viewport { flex: 1; min-height: 0; overflow: hidden; background: linear-gradient(#dcdcdc 420px, #f0f0f0 420px); display: grid; grid-template-columns: minmax(0, 1fr); align-content: start; }
    site-header { padding-right: 176px; }
    .page { width: 100%; padding-right: 176px; box-sizing: border-box; }
    .col { max-width: 960px; margin: 0 auto; }
    a { color: #2a5b9c; text-decoration: none; }
    .menu { display: flex; gap: 34px; margin-top: 20px; height: 39px; padding: 1px 0 0 77px; box-sizing: border-box; align-items: center; background: #fff; font: 14px/20px "Fira Sans", "Noto Sans", sans-serif; white-space: nowrap; }
    .menu a { color: #e8490f; display: flex; align-items: center; gap: 4px; }
    .menu a.drop { padding-right: 5px; }
    main { margin-top: 14px; padding: 19px 20px 60px; background: #fff; }
    .crumbs { line-height: 20px; color: #333; }
    .crumbs a { color: #000; text-decoration: underline; }
    h1 { margin: 13px 0 0; font-size: 14px; line-height: 16px; color: #222; }
    .block { margin-top: 6px; border: 1px solid #6690ad; background: #fff; }
    .block h2 { margin: 0; padding: 0 9px; border: 1px solid #c6c6e8; background: #2a5b9c; color: #fff; font-size: 11px; line-height: 23px; }
    .body { padding: 10px 27px 9px 20px; }
    .caption { display: block; font-weight: 700; line-height: 18px; }
    .title { display: block; width: 496px; height: 25px; box-sizing: border-box; border: 1px solid #6690ad; border-radius: 3px; padding: 0 4px; font: 11px/16px "DejaVu Sans", Verdana, sans-serif; outline: 0; }
    .compose { display: flex; gap: 6px; margin: 20px 0; align-items: flex-start; }
    post-editor { flex: 1; min-width: 0; }
    .smilies { display: grid; grid-template-columns: repeat(3, 24px); grid-auto-rows: 24px; place-items: center; font-size: 11px; margin-top: -1px; }
    .smilies button { display: flex; padding: 0; border: 0; background: none; }
    .smilies svg { overflow: visible; }
    .smilies .all { grid-column: 1 / -1; }
    .symbols { display: grid; grid-template-columns: repeat(7, 71px); grid-auto-rows: 22px; }
    .symbols label { display: flex; align-items: center; gap: 5px; padding-left: 2px; }
    .symbols .none { grid-column: 1 / -1; }
    input[type="radio"], input[type="checkbox"] { width: 13px; height: 13px; margin: 0; flex: none; }
    input[type="radio"] { appearance: none; border: 1px solid #555; border-radius: 50%; background: #fff; }
    input[type="radio"]:checked { background: radial-gradient(circle, #222 3px, #fff 4px); }
    input[type="checkbox"] { appearance: none; }
    .actions { display: flex; justify-content: flex-end; gap: 4px; margin-top: 5px; }
    .actions button { height: 24px; padding: 0 9px; border: 1px solid #aaa; background: linear-gradient(#f8f8f8, #e4e4e4); color: #333; font: bold 11px/16px "DejaVu Sans", Verdana, sans-serif; }
    .actions + .block { margin-top: 27px; }
    .settings { display: grid; grid-template-columns: 212px 1fr; line-height: 19px; padding: 9px 20px 40px; }
    .check { display: flex; align-items: center; gap: 5px; }
    .box { display: grid; }
    .box > * { grid-area: 1 / 1; }
    .box svg { pointer-events: none; }
    .hint { font-size: 11px; line-height: 16px; color: #777; }
    .taskbar { flex: none; display: flex; align-items: center; height: 40px; background: linear-gradient(#4b5662, #444d57); box-sizing: border-box; }
    .taskbar button { display: flex; align-items: center; justify-content: center; height: 38px; padding: 0; border: 0; background: none; box-sizing: border-box; width: 62px; }
    .taskbar .start { width: 58px; padding-right: 4px; }
    .taskbar .running { width: 54px; margin-left: 2px; background: #69717d; border: 1px solid #99a0a8; }
    .stack { width: 5px; height: 38px; box-sizing: border-box; border: 1px solid #99a0a8; border-left: 0; background: #5b636e; }
    project-panel { position: absolute; top: 0; right: 0; bottom: 0; width: 346px; z-index: 2; }
  `;
  render() {
    const menu: [string, boolean][] = [["Kontrollzentrum", false], ["Regeln", false], ["Hilfe", false], ["Mitglieder", true], ["Themen & Beiträge", true], ["Suchen", true], ["Nützliche Links", true]];
    const crumbs = ["Forum", "Ein-/Ausgabe und Laufwerke", "Monitore und Displays", "Audio nicht über HDMi sondern immer über die Boxen"];
    return html`<browser-chrome></browser-chrome>
      <div class="viewport">
        <site-header></site-header>
        <div class="page"><div class="col">
          <nav class="menu">${menu.map(([t, d]) => html`<a href="#" class=${classMap({ drop: d })}>${t}${d ? icon(8, 4, svg`<path d="M0 0h8L4 4z" fill="#444"/>`) : ""}</a>`)}</nav>
          <main>
            <div class="crumbs">${crumbs.map((c) => html`<a href="#">${c}</a> » `)}Antworten</div>
            <h1>Antworten</h1>
            <div>Thema: <a href="#">Audio nicht über HDMi sondern immer über die Boxen</a></div>
            <section class="block">
              <h2>Nachricht</h2>
              <div class="body">
                <label class="caption" for="title">Titel:</label>
                <input class="title" id="title" .value=${"AW: Audio nicht über HDMi sondern immer über die Boxen"} />
                <div class="compose">
                  <post-editor></post-editor>
                  <div class="smilies">
                    ${smilies.map(([n, a]) => html`<button aria-label=${n}>${icon(16, 16, a)}</button>`)}
                    <span class="all">[<a href="#">Weitere</a>]</span>
                  </div>
                </div>
                <span class="caption">Beitragssymbole:</span>
                <div class="symbols">
                  ${symbols.map(([n, a]) => html`<label><input type="radio" name="symbol" aria-label=${n} />${icon(16, 16, a)}</label>`)}
                  <label class="none"><input type="radio" name="symbol" checked />Kein Symbol</label>
                </div>
              </div>
            </section>
            <div class="actions"><button>Antworten</button><button>Vorschau</button></div>
            <section class="block">
              <h2>Zusätzliche Einstellungen</h2>
              <div class="settings">
                <span>Verschiedene Einstellungen:</span>
                <div>
                  <label class="check"><span class="box"><input type="checkbox" checked />${icon(13, 13, svg`<rect x=".500" y=".500" width="12" height="12" fill="#fff" stroke="#444"/><path d="M3 6l2.500 4L10 2.500" stroke="#111" stroke-width="2" fill="none"/>`)}</span>Links automatisch umwandeln</label>
                  <div class="hint">Wenn du diese Option aktivierst, werden URLs automatisch mit BB-Code ergänzt.<br />www.beispiel.de wird zu [URL]http://www.beispiel.de[/URL].</div>
                </div>
              </div>
            </section>
          </main>
        </div></div>
      </div>
      <footer class="taskbar">
        <button class="start" aria-label="Start">${icon(26, 26, svg`<path d="M0 4l11-2v10.500H0zM12 2l14-2v12.500H12zM0 13.500h11V24L0 22.500zM12 13.500h14V26l-14-2z" fill="#fff"/>`)}</button>
        <button aria-label="Explorer">${icon(32, 30, svg`<path d="M2 4q0-3 2-3h9l2 3h14q2 0 2 2v20H2z" fill="#dcb95a"/><rect x="6" y="1" width="6" height="3" fill="#28b43c"/><rect x="14" y="4" width="8" height="3" fill="#e85a3c"/><rect x="20" y="6" width="8" height="3" fill="#3c9ae8"/><path d="M1 9h17l2-2h10q2 0 2 2v18H1z" fill="#f6e3a0"/><path d="M1 12h31v3H1z" fill="#fdf3c8"/><path d="M5 29v-9q0-3 3-3h17q3 0 3 3v9h-5v-6H10v6z" fill="#8fd0ee" stroke="#4a9cc8"/><path d="M8 11v12M3 17h11" stroke="#fff"/>`)}</button>
        <button aria-label="Chrome">${icon(28, 28, svg`<circle cx="14" cy="14" r="14" fill="#fcd22c"/><path d="M14 14L1.900 7A14 14 0 0126.100 7H14z" fill="#e23c30"/><path d="M1.900 7A14 14 0 0013 28l6-10.500-11-.500z" fill="#3fae49"/><path d="M14 7h12.100A14 14 0 0013 28l7-11z" fill="#fcd22c"/><circle cx="14" cy="14" r="6.500" fill="#f4f4f4"/><circle cx="14" cy="14" r="5" fill="#3c78c8"/>`)}</button>
        <button class="running" aria-label="Firefox">${icon(30, 30, svg`<circle cx="16" cy="13" r="12.500" fill="#1c5aa4"/><path d="M8 4q6-5 13-1l-3 4 3 3-7 4z" fill="#48b0e4"/><path d="M25 4q5 5 5 12 0 13-14 14Q2 30 0 17 0 9 3 4l2 3q3-2 6 0l4 3q-1 3-4 4-1 4 3 6 4 0 6-2-1 4-5 5 8 1 10-7 2-6 0-12z" fill="#e8641c"/><path d="M26 5q5 7 2 15-3 6-9 8 8-6 8-14z" fill="#fcc83c"/><path d="M3 5l2 2q3-2 6 0l3 3q-3 3-7 3-3-3-4-8z" fill="#f08a30"/>`)}</button>
        <span class="stack"></span>
      </footer>
      <project-panel></project-panel>`;
  }
}
